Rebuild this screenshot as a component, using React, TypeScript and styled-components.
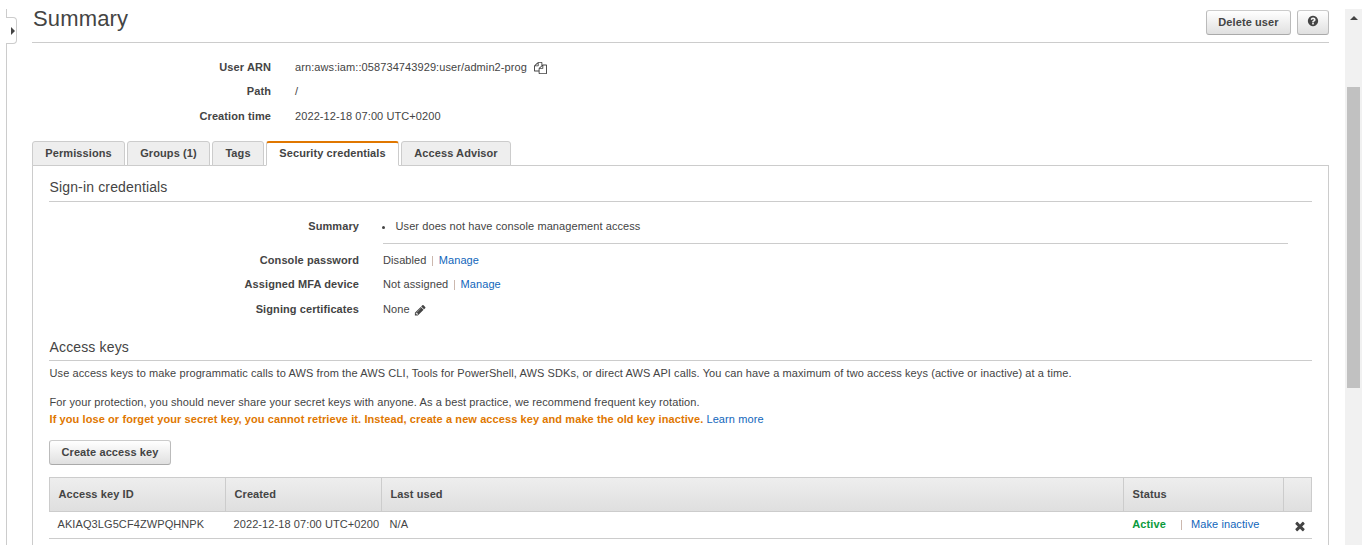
import React from "react";
import styled, { createGlobalStyle } from "styled-components";

const Global = createGlobalStyle`
  * { box-sizing: border-box; }
  html, body { margin: 0; padding: 0; background: #fff; overflow: hidden; }
  body {
    font-family: "Liberation Sans", Arial, sans-serif;
    font-size: 11px;
    line-height: 16px;
    letter-spacing: 0.092px;
    color: #444;
  }
`;

const Page = styled.div`
  display: flex;
  width: 1364px;
  height: 545px;
  padding-top: 9px;
  overflow: hidden;
`;

const Rail = styled.div`
  width: 11px;
  margin-left: 6px;
  display: flex;
  flex-direction: column;
`;
const RailLine = styled.div<{ $h?: number }>`
  width: 1px;
  background: #ccc;
  ${(p) => (p.$h ? `height: ${p.$h}px;` : "flex: 1;")}
`;
const RailHandle = styled.button`
  display: flex;
  align-items: center;
  width: 11px;
  height: 27px;
  padding: 0 0 0 5px;
  border: 1px solid #ccc;
  border-left: 0;
  border-radius: 0 4px 4px 0;
  background: #fff;
`;

const Content = styled.main`
  width: 1297px;
  margin-left: 15px;
  display: flex;
  flex-direction: column;
`;

const Header = styled.header`
  display: flex;
  height: 34px;
  border-bottom: 1px solid #ccc;
`;
const Title = styled.h1`
  margin: -3px auto 0 1px;
  font-size: 22px;
  line-height: 26px;
  font-weight: 400;
  letter-spacing: 0.15px;
`;

const Button = styled.button<{ $w: number }>`
  display: flex;
  align-items: center;
  justify-content: center;
  width: ${(p) => p.$w}px;
  height: 25px;
  padding: 0 0 1px;
  border: 1px solid #bbb;
  border-top-color: #ccc;
  border-bottom-color: #aaa;
  border-radius: 3px;
  background: linear-gradient(#fff, #e0e0e0);
  color: #444;
  font: bold 11px "Liberation Sans", Arial, sans-serif;
  letter-spacing: 0.092px;
`;
const Actions = styled.div`
  display: flex;
  gap: 6px;
  padding-top: 1px;
`;

const T = styled.span`
  white-space: pre;
`;

const Details = styled.dl<{ $label: number; $mt: number }>`
  display: grid;
  grid-template-columns: ${(p) => p.$label}px 1fr;
  column-gap: 24px;
  margin: ${(p) => p.$mt}px 0 0;
`;
const Label = styled.dt`
  font-weight: 700;
  text-align: right;
`;
const Value = styled.dd<{ $h: number }>`
  display: flex;
  margin: 0;
  height: ${(p) => p.$h}px;
`;

const Tabs = styled.nav`
  display: flex;
  gap: 2px;
  margin-bottom: -1px;
`;
const Tab = styled.div<{ $w: number; $active?: boolean }>`
  display: flex;
  justify-content: center;
  width: ${(p) => p.$w}px;
  height: 25px;
  padding-top: ${(p) => (p.$active ? 2 : 3)}px;
  border: 1px solid #ccc;
  border-top: ${(p) => (p.$active ? "2px solid #e07700" : "1px solid #ccc")};
  border-bottom-color: ${(p) => (p.$active ? "#fff" : "#ccc")};
  border-radius: 3px 3px 0 0;
  background: ${(p) => (p.$active ? "#fff" : "#eee")};
  font-weight: 700;
  z-index: 1;
`;
const Panel = styled.section`
  flex: 1;
  padding: 11px 16px 0;
  border: 1px solid #ccc;
  border-bottom: 0;
`;
const SectionTitle = styled.h2<{ $pt?: number }>`
  margin: 0;
  height: 25px;
  padding: ${(p) => p.$pt ?? 0}px 0 0 0.5px;
  border-bottom: 1px solid #ccc;
  font-size: 14px;
  line-height: 20px;
  font-weight: 400;
  letter-spacing: 0.15px;
`;
const SummaryItem = styled.div`
  display: flex;
  align-items: flex-start;
  width: 905px;
  height: 26px;
  border-bottom: 1px solid #ccc;
`;
const Bullet = styled.i`
  width: 3px;
  height: 3px;
  margin: 8px 10.5px 0 -1px;
  border-radius: 50%;
  background: #444;
`;
const Link = styled.a`
  color: #1166bb;
  white-space: pre;
`;
const Bar = styled.span<{ $gap?: number }>`
  width: 1px;
  height: 10px;
  margin: 4px ${(p) => p.$gap ?? 5.5}px 0 5.7px;
  background: #ccb8ae;
`;
const Para = styled.p<{ $mt: number }>`
  display: flex;
  margin: ${(p) => p.$mt}px 0 0 0.5px;
  height: 17px;
  line-height: 17px;
`;
const Warning = styled(T)`
  color: #e07700;
  font-weight: 700;
  margin-right: 3px;
`;
const CreateRow = styled.div`
  margin: 12px 0;
`;

const cols = "176px 156px 742px 160px 29px";
const HeadRow = styled.div`
  display: grid;
  grid-template-columns: ${cols};
  height: 35px;
  border: 1px solid #ccc;
  border-width: 1px 0;
  background: linear-gradient(#eee, #dfdfdf);
  font-weight: 700;
`;
const HeadCell = styled.div`
  padding: 8px 0 0 8.5px;
  border-left: 1px solid #ccc;
  &:last-child { border-right: 1px solid #ccc; }
`;
const BodyRow = styled.div`
  display: grid;
  grid-template-columns: ${cols};
  height: 27px;
  border-bottom: 1px solid #ccc;
`;
const BodyCell = styled.div`
  display: flex;
  padding: 4px 0 0 8.5px;
`;
const Active = styled(T)`
  width: 43.5px;
  margin-left: 0.8px;
  color: #0a9a3c;
  font-weight: 700;
`;

const Scrollbar = styled.div`
  display: flex;
  flex-direction: column;
  align-items: center;
  width: 17px;
  margin-left: 16px;
  background: #f1f1f1;
`;
const ArrowBox = styled.div`
  display: flex;
  justify-content: center;
  height: 78px;
  padding-top: 7px;
`;
const Thumb = styled.div`
  width: 13px;
  height: 301px;
  background: #c1c1c1;
`;
const Glyph = styled.svg<{ $m?: string }>`
  display: block;
  flex: none;
  margin: ${(p) => p.$m ?? "0"};
  fill: #444;
`;

export default function App() {
  return (
    <>
      <Global />
      <Page>
        <Rail>
          <RailLine $h={8} />
          <RailHandle>
            <Glyph width="4" height="8" viewBox="0 0 4 8"><path d="M0 0L4 4L0 8Z" /></Glyph>
          </RailHandle>
          <RailLine />
        </Rail>
        <Content>
          <Header>
            <Title>Summary</Title>
            <Actions>
              <Button $w={85}><T>Delete user</T></Button>
              <Button $w={32}>
                <Glyph $m="0 0 2px" width="12" height="12" viewBox="0 0 1792 1792">
                  <path d="M1024 1376v-192q0-14-9-23t-23-9h-192q-14 0-23 9t-9 23v192q0 14 9 23t23 9h192q14 0 23-9t9-23zm256-672q0-88-55.5-163t-138.5-116-170-41q-243 0-371 213-15 24 8 42l132 100q7 6 19 6 16 0 25-12 53-68 86-92 34-24 86-24 48 0 85.5 26t37.5 59q0 38-20 61t-68 45q-63 28-115.5 86.5t-52.5 125.5v36q0 14 9 23t23 9h192q14 0 23-9t9-23q0-19 21.5-49.5t54.5-49.5q32-18 49-28.5t46-35 44.5-48 28-60.5 12.5-81zm384 192q0 209-103 385.5t-279.5 279.5-385.5 103-385.5-103-279.5-279.5-103-385.5 103-385.5 279.5-279.5 385.5-103 385.5 103 279.5 279.5 103 385.5z" />
                </Glyph>
              </Button>
            </Actions>
          </Header>
          <Details $label={239} $mt={16}>
            <Label><T>User ARN</T></Label>
            <Value $h={24}>
              <T>arn:aws:iam::058734743929:user/admin2-prog</T>
              <Glyph $m="3px 0 0 7.5px" width="13" height="12" viewBox="0 0 1792 1792" preserveAspectRatio="none">
                <path d="M1696 384q40 0 68 28t28 68v1216q0 40-28 68t-68 28h-960q-40 0-68-28t-28-68v-288h-544q-40 0-68-28t-28-68v-672q0-40 20-88t48-76l408-408q28-28 76-48t88-20h416q40 0 68 28t28 68v328q68-40 128-40h416zm-544 213l-299 299h299v-299zm-640-384l-299 299h299v-299zm196 647l316-316v-416h-384v416q0 40-28 68t-68 28h-416v640h512v-256q0-40 20-88t48-76zm956 804v-1152h-384v416q0 40-28 68t-68 28h-416v640h896z" />
              </Glyph>
            </Value>
            <Label><T>Path</T></Label>
            <Value $h={25}><T>/</T></Value>
            <Label><T>Creation time</T></Label>
            <Value $h={33}><T>2022-12-18 07:00 UTC+0200</T></Value>
          </Details>
          <Tabs>
            <Tab $w={93}><T>Permissions</T></Tab>
            <Tab $w={83}><T>Groups (1)</T></Tab>
            <Tab $w={52}><T>Tags</T></Tab>
            <Tab $w={133} $active><T>Security credentials</T></Tab>
            <Tab $w={110}><T>Access Advisor</T></Tab>
          </Tabs>
          <Panel>
            <SectionTitle><T>Sign-in credentials</T></SectionTitle>
            <Details $label={310} $mt={16}>
              <Label><T>Summary</T></Label>
              <Value $h={34}>
                <SummaryItem><Bullet /><T>User does not have console management access</T></SummaryItem>
              </Value>
              <Label><T>Console password</T></Label>
              <Value $h={24}><T>Disabled</T><Bar /><Link>Manage</Link></Value>
              <Label><T>Assigned MFA device</T></Label>
              <Value $h={25}><T>Not assigned</T><Bar /><Link>Manage</Link></Value>
              <Label><T>Signing certificates</T></Label>
              <Value $h={35}>
                <T>None</T>
                <Glyph $m="3px 0 0 4px" width="12.5" height="12.5" viewBox="0 0 1792 1792">
                  <path d="M491 1536l91-91-235-235-91 91v107h128v128h107zm523-928q0-22-22-22-10 0-17 7l-542 542q-7 7-7 17 0 22 22 22 10 0 17-7l542-542q7-7 7-17zm-54-192l416 416-832 832h-416v-416zm683 96q0 53-37 90l-166 166-416-416 166-165q36-38 90-38 53 0 91 38l235 234q37 39 37 91z" />
                </Glyph>
              </Value>
            </Details>
            <SectionTitle $pt={1}><T>Access keys</T></SectionTitle>
            <Para $mt={4}><T>Use access keys to make programmatic calls to AWS from the AWS CLI, Tools for PowerShell, AWS SDKs, or direct AWS API calls. You can have a maximum of two access keys (active or inactive) at a time.</T></Para>
            <Para $mt={12}><T>For your protection, you should never share your secret keys with anyone. As a best practice, we recommend frequent key rotation.</T></Para>
            <Para $mt={0}>
              <Warning>If you lose or forget your secret key, you cannot retrieve it. Instead, create a new access key and make the old key inactive.</Warning>
              <Link>Learn more</Link>
            </Para>
            <CreateRow><Button $w={122}><T>Create access key</T></Button></CreateRow>
            <HeadRow>
              <HeadCell><T>Access key ID</T></HeadCell>
              <HeadCell><T>Created</T></HeadCell>
              <HeadCell><T>Last used</T></HeadCell>
              <HeadCell><T>Status</T></HeadCell>
              <HeadCell />
            </HeadRow>
            <BodyRow>
              <BodyCell><T>AKIAQ3LG5CF4ZWPQHNPK</T></BodyCell>
              <BodyCell><T>2022-12-18 07:00 UTC+0200</T></BodyCell>
              <BodyCell><T>N/A</T></BodyCell>
              <BodyCell><Active>Active</Active><Bar $gap={8.5} /><Link>Make inactive</Link></BodyCell>
              <BodyCell>
                <Glyph $m="3px 0 0 1.5px" width="14" height="14" viewBox="0 0 1792 1792">
                  <path d="M1490 1322q0 40-28 68l-136 136q-28 28-68 28t-68-28l-294-294-294 294q-28 28-68 28t-68-28l-136-136q-28-28-28-68t28-68l294-294-294-294q-28-28-28-68t28-68l136-136q28-28 68-28t68 28l294 294 294-294q28-28 68-28t68 28l136 136q28 28 28 68t-28 68l-294 294 294 294q28 28 28 68z" />
                </Glyph>
              </BodyCell>
            </BodyRow>
          </Panel>
        </Content>
        <Scrollbar>
          <ArrowBox>
            <Glyph width="8" height="4" viewBox="0 0 8 4"><path d="M0 4L4 0L8 4Z" /></Glyph>
          </ArrowBox>
          <Thumb />
        </Scrollbar>
      </Page>
    </>
  );
}
